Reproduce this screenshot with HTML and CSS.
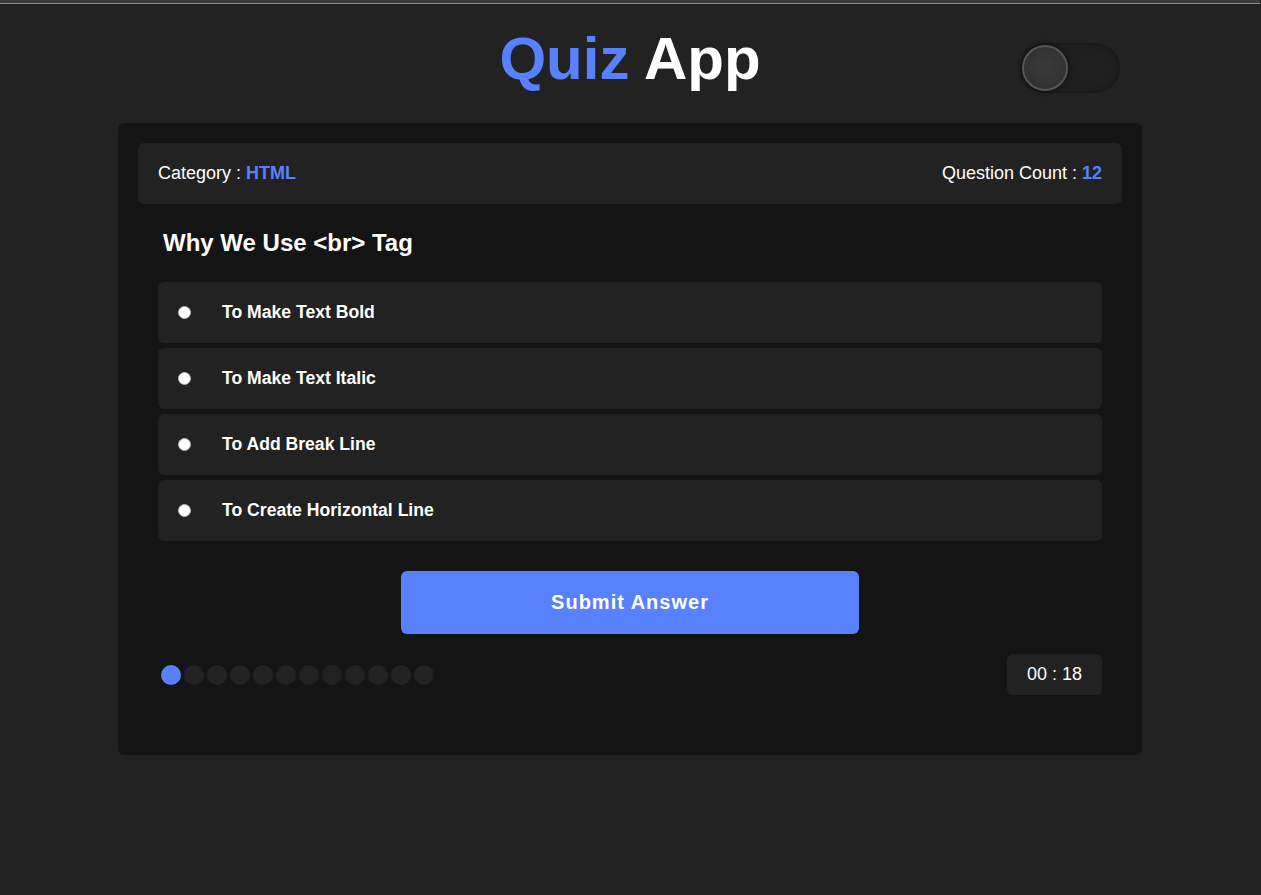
FILE: index.html
```html
<!DOCTYPE html>
<html lang="en">
<head>
<meta charset="utf-8">
<title>Quiz App</title>
<link rel="stylesheet" href="styles.css">
</head>
<body>
<div class="topbar"></div>
<header class="app-header">
  <div></div>
  <h1 class="title"><span class="accent">Quiz</span> App</h1>
  <div class="toggle"><span class="knob"></span></div>
</header>
<main class="quiz">
  <div class="info">
    <div>Category : <span class="accent bold">HTML</span></div>
    <div>Question Count : <span class="accent bold">12</span></div>
  </div>
  <h2 class="question">Why We Use &lt;br&gt; Tag</h2>
  <div class="options">
    <label class="option"><input type="radio" name="q"><span>To Make Text Bold</span></label>
    <label class="option"><input type="radio" name="q"><span>To Make Text Italic</span></label>
    <label class="option"><input type="radio" name="q"><span>To Add Break Line</span></label>
    <label class="option"><input type="radio" name="q"><span>To Create Horizontal Line</span></label>
  </div>
  <div class="actions"><button class="submit">Submit Answer</button></div>
  <div class="footer">
    <div class="bullets">
      <span class="dot on"></span><span class="dot"></span><span class="dot"></span><span class="dot"></span><span class="dot"></span><span class="dot"></span><span class="dot"></span><span class="dot"></span><span class="dot"></span><span class="dot"></span><span class="dot"></span><span class="dot"></span>
    </div>
    <div class="timer">00 : 18</div>
  </div>
</main>
</body>
</html>
```
FILE: styles.css
```css
* { box-sizing: border-box; }
html, body { margin: 0; padding: 0; }
body {
  background: #222222;
  font-family: "Liberation Sans", Arial, sans-serif;
  color: #ffffff;
  min-height: 895px;
  padding-right: 1px;
}
.topbar {
  height: 4px;
  background: #3c3c3c;
  border-bottom: 1px solid #8a8a8a;
}
.app-header {
  width: 1024px;
  margin: 0 auto;
  display: grid;
  grid-template-columns: 1fr auto 1fr;
  padding-top: 20px;
  padding-bottom: 30px;
}
.title {
  margin: 0;
  font-size: 60px;
  font-weight: bold;
  line-height: 69px;
}
.accent { color: #5781ff; }
.bold { font-weight: bold; }
.toggle {
  justify-self: end;
  align-self: start;
  margin-top: 19px;
  margin-right: 22px;
  width: 100px;
  height: 50px;
  border-radius: 25px;
  background: #1f1f1f;
  box-shadow: inset 0 0 6px rgba(0,0,0,0.35);
  display: flex;
  align-items: center;
  padding-left: 2px;
}
.knob {
  width: 46px;
  height: 46px;
  border-radius: 50%;
  background: radial-gradient(circle at 50% 45%, #3a3a3a 0%, #333 60%, #2e2e2e 100%);
  border: 2px solid #555;
  box-shadow: 0 0 6px rgba(0,0,0,0.6);
}
.quiz {
  width: 1024px;
  margin: 0 auto;
  background: #141414;
  border-radius: 6px;
  padding: 20px 20px 60px;
}
.info {
  background: #222222;
  border-radius: 6px;
  padding: 20px;
  display: flex;
  justify-content: space-between;
  font-size: 18px;
  line-height: 21px;
}
.question {
  margin: 25px 25px 25px;
  font-size: 24px;
  font-weight: bold;
  line-height: 28px;
}
.options {
  margin: 0 20px;
  display: flex;
  flex-direction: column;
  gap: 5px;
}
.option {
  background: #222222;
  border-radius: 6px;
  height: 61px;
  display: flex;
  align-items: center;
  padding-left: 20px;
  font-size: 17.6px;
  font-weight: bold;
}
.option input {
  appearance: none;
  -webkit-appearance: none;
  width: 13px;
  height: 13px;
  margin: 0 31px 0 0;
  border-radius: 50%;
  background: #ffffff;
  border: 1px solid #b5b5b5;
}
.actions {
  display: flex;
  justify-content: center;
  margin-top: 30px;
}
.submit {
  width: 458px;
  height: 63px;
  border: none;
  border-radius: 6px;
  background: #5781ff;
  color: #ffffff;
  font-family: "Liberation Sans", Arial, sans-serif;
  font-size: 20px;
  font-weight: bold;
  letter-spacing: 1px;
}
.footer {
  margin: 20px 20px 0;
  display: flex;
  justify-content: space-between;
  align-items: center;
}
.bullets {
  display: flex;
  gap: 3px;
  padding-left: 3px;
}
.dot {
  width: 20px;
  height: 20px;
  border-radius: 50%;
  background: #222222;
}
.dot.on { background: #5781ff; }
.timer {
  background: #222222;
  border-radius: 6px;
  padding: 10px 20px;
  font-size: 18px;
  line-height: 21px;
}
```
